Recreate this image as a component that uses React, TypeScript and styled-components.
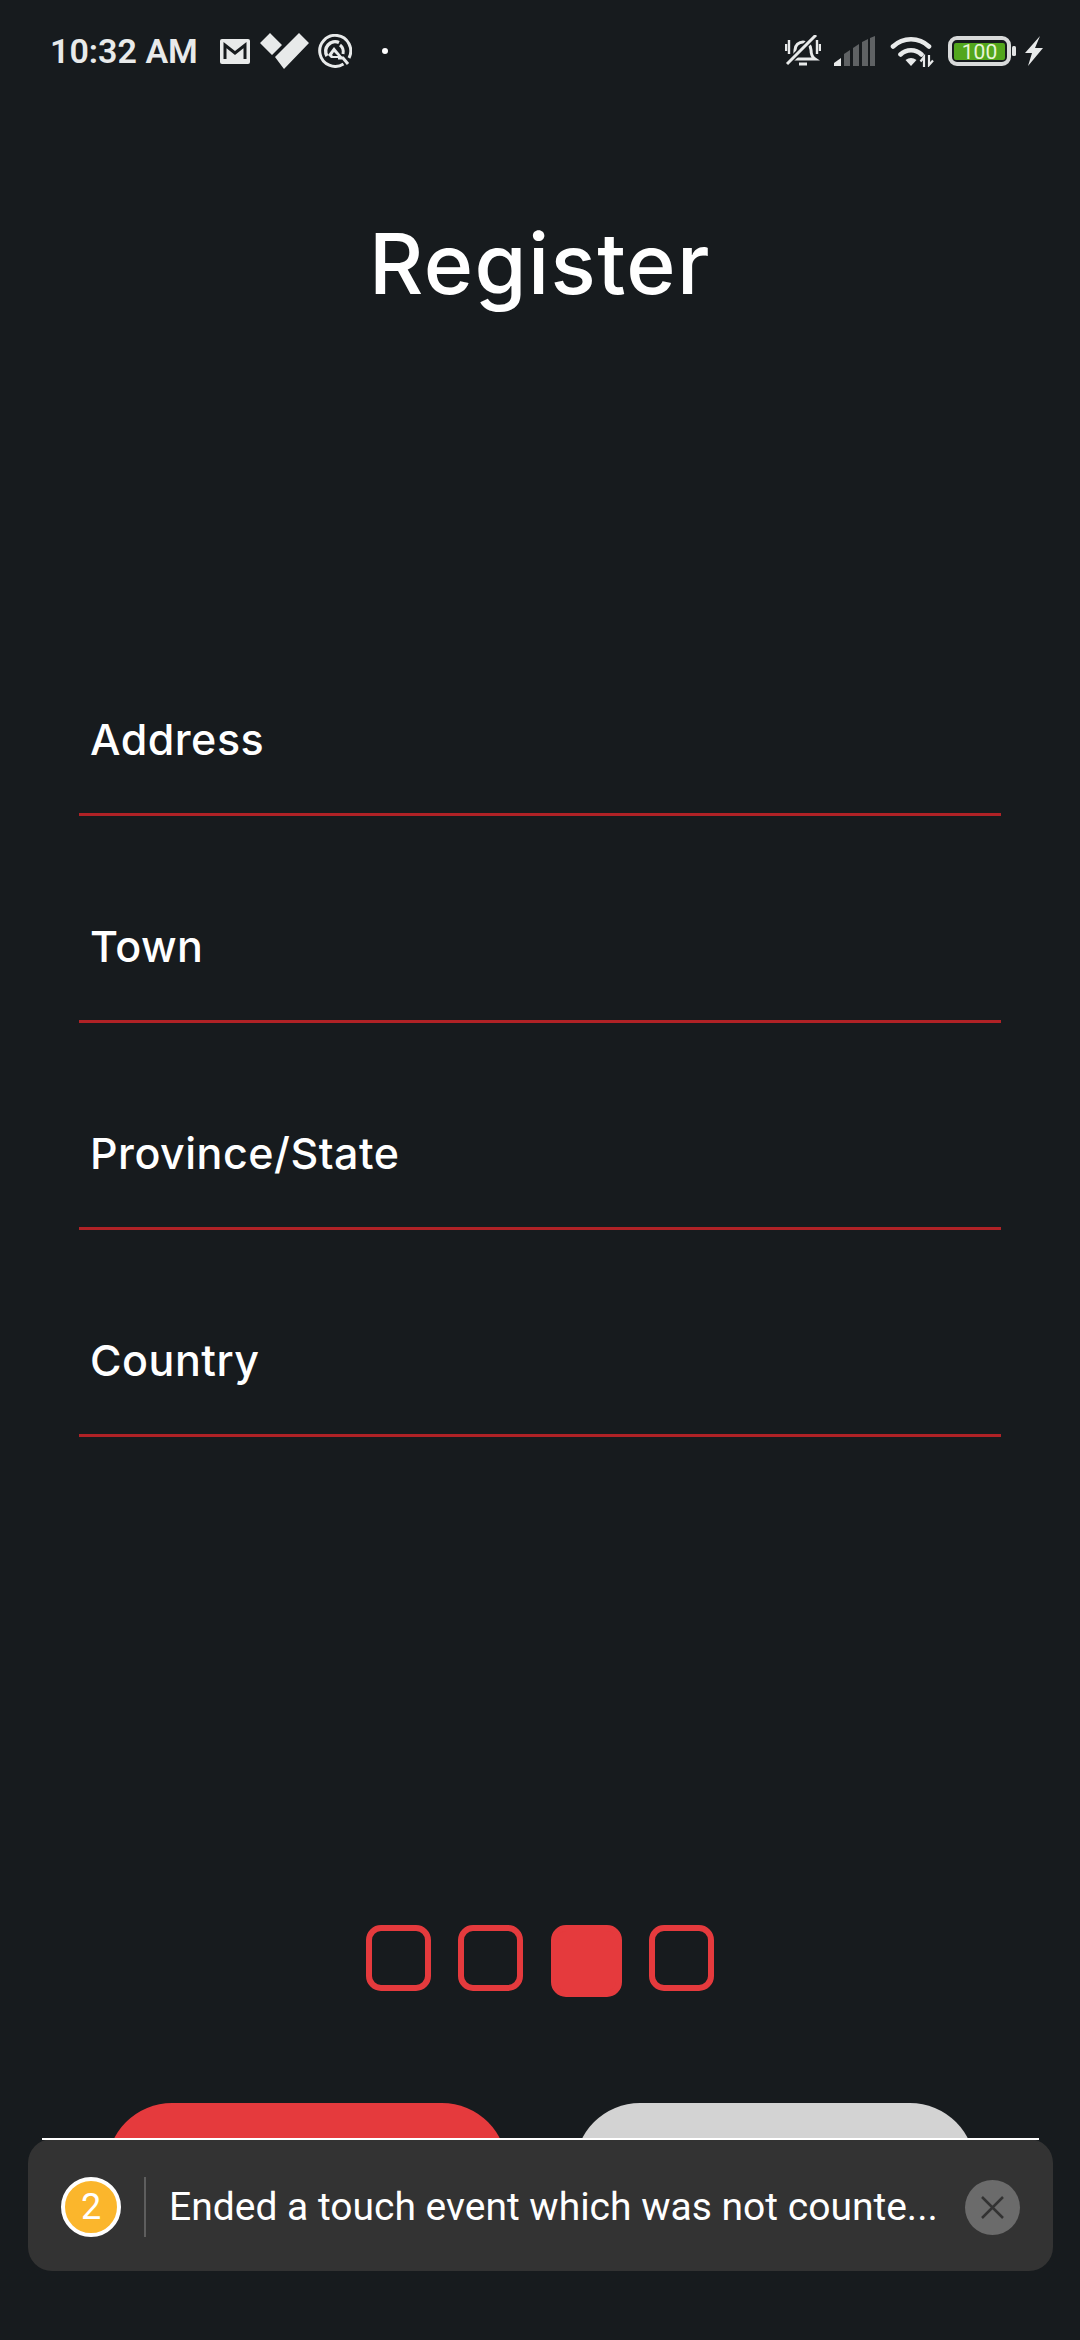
import React from "react";
import styled, { createGlobalStyle } from "styled-components";

const Global = createGlobalStyle`
  html, body { margin: 0; padding: 0; background: #171b1e; }
  * { box-sizing: border-box; }
`;

const Screen = styled.div`
  position: relative;
  width: 1080px;
  height: 2340px;
  overflow: hidden;
  background: #171b1e;
  font-family: Inter, "Liberation Sans", sans-serif;
  color: #fff;
  display: flex;
  flex-direction: column;
`;

const StatusBar = styled.div`
  height: 102px;
  padding: 33px 36px 0 50px;
  display: flex;
  align-items: flex-start;
  justify-content: space-between;
`;

const StatusGroup = styled.div`
  display: flex;
  align-items: center;
  height: 36px;
`;

const Clock = styled.span`
  font-family: Roboto, sans-serif;
  font-weight: 600;
  font-size: 34px;
  line-height: 36px;
  color: #e8eaea;
  width: 170px;
  white-space: nowrap;
`;

const Title = styled.h1`
  margin: 107px 0 0;
  height: 110px;
  font-size: 84px;
  line-height: 110px;
  font-weight: 500;
  letter-spacing: 1.400px;
  text-align: center;
`;

const Form = styled.div`
  margin: 290px 79px 0;
  display: flex;
  flex-direction: column;
`;

const Field = styled.div`
  height: 207px;
  border-bottom: 3px solid #b02226;
  padding: 0 0 44px 11px;
  display: flex;
  align-items: flex-end;
`;

const Label = styled.span`
  font-size: 43px;
  line-height: 60px;
  font-weight: 500;
  letter-spacing: 0.500px;
`;

const Steps = styled.div`
  margin-top: 488px;
  height: 72px;
  display: flex;
  justify-content: center;
  align-items: flex-start;
  gap: 27px;
`;

const Step = styled.div<{ $active?: boolean }>`
  width: ${(p) => (p.$active ? 71 : 65)}px;
  height: ${(p) => (p.$active ? 72 : 66)}px;
  margin-left: ${(p) => (p.$active ? 1 : 0)}px;
  border: 6px solid #e53a3d;
  border-radius: 15px;
  background: ${(p) => (p.$active ? "#e53a3d" : "transparent")};
`;

const Buttons = styled.div`
  margin-top: 106px;
  display: flex;
  justify-content: center;
  gap: 68px;
  padding-left: 2px;
`;

const Pill = styled.div<{ $tone: "primary" | "muted" }>`
  width: 400px;
  height: 130px;
  border-radius: 65px;
  background: ${(p) => (p.$tone === "primary" ? "#e53a3d" : "#d3d3d3")};
`;

const Toast = styled.div`
  position: absolute;
  left: 28px;
  top: 2139px;
  width: 1025px;
  height: 132px;
  border-radius: 24px;
  background: #333333;
  display: flex;
  align-items: center;
  padding: 4px 33px 0 33px;
`;

const ToastEdge = styled.div`
  position: absolute;
  left: 14px;
  right: 14px;
  top: -1px;
  height: 2px;
  background: #fff;
`;

const Badge = styled.div`
  width: 60px;
  height: 60px;
  flex: none;
  border-radius: 50%;
  border: 4px solid #fff;
  background: #fbb62c;
  font-family: Roboto, sans-serif;
  font-size: 36px;
  color: #fff;
  display: flex;
  align-items: center;
  justify-content: center;
`;

const Divider = styled.div`
  width: 2px;
  height: 60px;
  flex: none;
  margin: 0 23px;
  background: #5e5e5e;
`;

const Message = styled.span`
  flex: 1;
  font-family: Roboto, sans-serif;
  font-size: 39px;
  line-height: 44px;
  color: #fff;
  white-space: nowrap;
`;

const Close = styled.div`
  width: 55px;
  height: 55px;
  flex: none;
  border-radius: 50%;
  background: #6b6b6b;
  display: flex;
  align-items: center;
  justify-content: center;
`;

const Svg = styled.svg<{ $gap?: number }>`
  display: block;
  flex: none;
  margin-left: ${(p) => p.$gap ?? 0}px;
`;

const Mail = () => (
  <Svg width="30" height="25" viewBox="0 0 30 25" $gap={0}>
    <rect width="30" height="25" rx="2" fill="#e8eaea" />
    <path d="M5 20V6l10 8 10-8v14" fill="none" stroke="#171b1e" strokeWidth="3" />
  </Svg>
);

const Check = () => (
  <Svg width="50" height="36" viewBox="0 0 50 36" $gap={10}>
    <path d="M0 10 10 0l12 12-10 10z M15 24 39 0l10 10-25 26z" fill="#e8eaea" />
  </Svg>
);

const QMark = () => (
  <Svg width="34" height="34" viewBox="0 0 34 34" $gap={8}>
    <path d="M25.500 30A15.500 15.500 0 1 1 31 24" fill="none" stroke="#e8eaea" strokeWidth="3" />
    <path d="M21 8.500A9.500 9.500 0 0 0 9 22" fill="none" stroke="#e8eaea" strokeWidth="3.500" />
    <path d="M16 13l-6 8 3 3h12z" fill="#e8eaea" />
    <path d="M16 18l-2 3 1 1h5z" fill="#171b1e" />
    <path d="M20 24h5l5 6" fill="none" stroke="#e8eaea" strokeWidth="3" />
    <path d="M22 11a9 9 0 0 1 3 9" fill="none" stroke="#e8eaea" strokeWidth="3" />
  </Svg>
);

const Dot = styled.span`
  width: 6px;
  height: 6px;
  margin-left: 30px;
  border-radius: 50%;
  background: #fff;
`;

const Bell = () => (
  <Svg width="36" height="32" viewBox="0 0 36 32">
    <path
      d="M7 24c3-2 3-5 3-9 0-5 4-8 8-8s8 3 8 8c0 4 1 7 4 9z M14 29h8"
      fill="none"
      stroke="#e8eaea"
      strokeWidth="3"
    />
    <path d="M1 9v7M4 5v14M32 5v14M35 9v7" stroke="#e8eaea" strokeWidth="2.400" />
    <path d="M3 28 30 1" stroke="#171b1e" strokeWidth="6" />
    <path d="M2 29 31 0" stroke="#e8eaea" strokeWidth="3" />
  </Svg>
);

const Signal = () => (
  <Svg width="41" height="30" viewBox="0 0 41 30" $gap={13}>
    <path d="M0 30v-3l7-5v8z" fill="#e8eaea" />
    <path d="M10 30V18l6-4v16zM19 30V12l6-4v22zM28 30V6l6-3v27zM36 30V2l5-2v30z" fill="#5f6264" />
  </Svg>
);

const Wifi = () => (
  <Svg width="44" height="32" viewBox="0 0 44 32" $gap={15}>
    <path d="M3 11.500A26 26 0 0 1 39 11.500M10.500 19.500A15 15 0 0 1 31.500 19.500" fill="none" stroke="#e8eaea" strokeWidth="4.600" strokeLinecap="round" />
    <path d="M15.500 25a9 9 0 0 1 11 0l-5.500 6z" fill="#e8eaea" />
    <path d="M34 32V22l-3.500 4.500M39 20v10l4-4.500" fill="none" stroke="#e8eaea" strokeWidth="2.200" />
  </Svg>
);

const Battery = () => (
  <Svg width="68" height="30" viewBox="0 0 68 30" $gap={14}>
    <rect x="2" y="2" width="59" height="26" rx="7" fill="none" stroke="#d8dada" strokeWidth="4" />
    <rect x="6" y="7" width="51" height="17" rx="2" fill="#52a61d" />
    <text x="31.500" y="23" textAnchor="middle" fontFamily="Roboto, sans-serif" fontSize="21" fill="#e8f5d8">
      100
    </text>
    <rect x="64" y="10" width="4" height="10" rx="1.500" fill="#e0e2e2" />
  </Svg>
);

const Bolt = () => (
  <Svg width="20" height="30" viewBox="0 0 20 30" $gap={8}>
    <path d="M16 0 1 17h7L4 30l15-18h-8z" fill="#e8eaea" />
  </Svg>
);

const fields = ["Address", "Town", "Province/State", "Country"];

export default function App() {
  return (
    <Screen>
      <Global />
      <StatusBar>
        <StatusGroup>
          <Clock>10:32 AM</Clock>
          <Mail />
          <Check />
          <QMark />
          <Dot />
        </StatusGroup>
        <StatusGroup>
          <Bell />
          <Signal />
          <Wifi />
          <Battery />
          <Bolt />
        </StatusGroup>
      </StatusBar>
      <Title>Register</Title>
      <Form>
        {fields.map((f) => (
          <Field key={f}>
            <Label>{f}</Label>
          </Field>
        ))}
      </Form>
      <Steps>
        <Step />
        <Step />
        <Step $active />
        <Step />
      </Steps>
      <Buttons>
        <Pill $tone="primary" />
        <Pill $tone="muted" />
      </Buttons>
      <Toast>
        <ToastEdge />
        <Badge>2</Badge>
        <Divider />
        <Message>Ended a touch event which was not counte...</Message>
        <Close>
          <svg width="25" height="25" viewBox="0 0 25 25">
            <path d="M2 2l21 21M23 2 2 23" stroke="#333" strokeWidth="2.500" />
          </svg>
        </Close>
      </Toast>
    </Screen>
  );
}
